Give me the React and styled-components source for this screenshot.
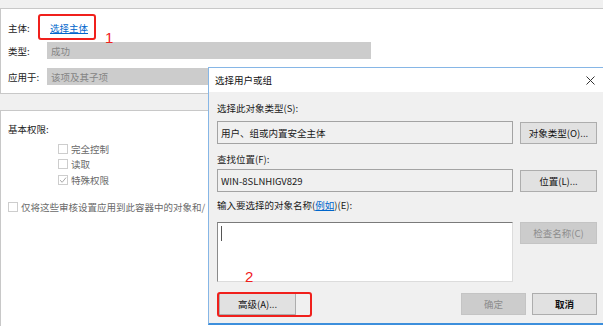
import styled, { createGlobalStyle } from "styled-components";

const GlobalStyle = createGlobalStyle`
  html, body {
    margin: 0;
    padding: 0;
  }
  body {
    background: #f0f0f0;
    font-family: "Noto Sans CJK SC", "Noto Sans", sans-serif;
    font-size: 9.5px;
    color: #1a1a1a;
  }
`;

export default function App() {
  return (
    <Screen>
      <GlobalStyle />
      <TopPanel>
        <FieldRow>
          <FieldLabel>主体:</FieldLabel>
          <LinkText $pad>选择主体</LinkText>
        </FieldRow>
        <FieldRow $gap={6}>
          <FieldLabel>类型:</FieldLabel>
          <Combo>成功</Combo>
        </FieldRow>
        <FieldRow $gap={9}>
          <FieldLabel>应用于:</FieldLabel>
          <Combo>该项及其子项</Combo>
        </FieldRow>
      </TopPanel>

      <BottomPanel>
        <SectionTitle>基本权限:</SectionTitle>
        <CheckList>
          <CheckItem>
            <Box />
            <CheckText>完全控制</CheckText>
          </CheckItem>
          <CheckItem>
            <Box />
            <CheckText>读取</CheckText>
          </CheckItem>
          <CheckItem>
            <Box>
              <svg width="8" height="8" viewBox="0 0 8 8">
                <path d="M1 4.2 L3.2 6.3 L7 1.6" fill="none" stroke="#a8a8a8" strokeWidth="1" />
              </svg>
            </Box>
            <CheckText>特殊权限</CheckText>
          </CheckItem>
        </CheckList>
        <ApplyRow>
          <Box />
          <CheckText>仅将这些审核设置应用到此容器中的对象和/</CheckText>
        </ApplyRow>
      </BottomPanel>

      <Dialog>
        <TitleBar>
          <span>选择用户或组</span>
          <CloseIcon width="9" height="9" viewBox="0 0 9 9">
            <path d="M0.5 0.5 L8.5 8.5 M8.5 0.5 L0.5 8.5" stroke="#333" strokeWidth="1" />
          </CloseIcon>
        </TitleBar>
        <DialogBody>
          <DlgLabel $gap={10}>选择此对象类型(S):</DlgLabel>
          <DlgRow $gap={7}>
            <ReadBox>用户、组或内置安全主体</ReadBox>
            <Button>对象类型(O)...</Button>
          </DlgRow>
          <DlgLabel $gap={9}>查找位置(F):</DlgLabel>
          <DlgRow $gap={4}>
            <ReadBox>WIN-8SLNHIGV829</ReadBox>
            <Button>位置(L)...</Button>
          </DlgRow>
          <DlgLabel $gap={7}>
            <span>输入要选择的对象名称(</span>
            <LinkText>例如</LinkText>
            <span>)(E):</span>
          </DlgLabel>
          <DlgRow $gap={11} $top>
            <NameArea>
              <Caret />
            </NameArea>
            <Button $disabled>检查名称(C)</Button>
          </DlgRow>
          <FooterRow>
            <Button>高级(A)...</Button>
            <Spacer />
            <Button $disabled $w={65}>确定</Button>
            <Button $w={65} $strong>取消</Button>
          </FooterRow>
        </DialogBody>
      </Dialog>

      <Mark style={{ left: 38, top: 14, width: 58, height: 26 }} />
      <MarkNumber style={{ left: 105, top: 30 }}>1</MarkNumber>
      <Mark style={{ left: 217, top: 292, width: 95, height: 25 }} />
      <MarkNumber style={{ left: 245, top: 269 }}>2</MarkNumber>
    </Screen>
  );
}

const Screen = styled.div`
  position: relative;
  width: 603px;
  height: 326px;
  overflow: hidden;
  background: #f0f0f0;
  padding-top: 8px;
  box-sizing: border-box;
  display: flex;
  flex-direction: column;
`;

const TopPanel = styled.section`
  background: #fff;
  border: 1px solid #c8c8c8;
  border-right: none;
  height: 86px;
  box-sizing: border-box;
  padding: 10px 0 0 7px;
  display: flex;
  flex-direction: column;
`;

const FieldRow = styled.div`
  display: flex;
  align-items: center;
  height: 17px;
  margin-top: ${(p) => p.$gap || 0}px;
`;

const FieldLabel = styled.span`
  width: 39px;
  flex: none;
  color: #222;
`;

const LinkText = styled.span`
  color: #0066cc;
  text-decoration: underline;
  padding-left: ${(p) => (p.$pad ? 3 : 0)}px;
`;

const Combo = styled.div`
  width: 320px;
  height: 17px;
  background: #cccccc;
  color: #858585;
  padding-left: 4px;
  display: flex;
  align-items: center;
`;

const BottomPanel = styled.section`
  flex: 1;
  margin-top: 16px;
  background: #fff;
  border: 1px solid #c8c8c8;
  border-right: none;
  border-bottom: none;
  padding: 12px 0 0 7px;
  display: flex;
  flex-direction: column;
`;

const SectionTitle = styled.div`
  height: 12px;
  line-height: 12px;
  color: #222;
`;

const CheckList = styled.div`
  display: flex;
  flex-direction: column;
  margin: 6px 0 0 50px;
`;

const CheckItem = styled.div`
  display: flex;
  align-items: center;
  height: 15.5px;
`;

const Box = styled.span`
  width: 10px;
  height: 10px;
  box-sizing: border-box;
  border: 1px solid #cdcdcd;
  background: #fff;
  flex: none;
  display: flex;
  align-items: center;
  justify-content: center;
`;

const CheckText = styled.span`
  margin-left: 3px;
  color: #6a6a6a;
  white-space: nowrap;
`;

const ApplyRow = styled.div`
  display: flex;
  align-items: center;
  width: 200px;
  overflow: hidden;
  height: 14px;
  margin-top: 12px;
`;

const Dialog = styled.div`
  position: absolute;
  left: 208px;
  top: 67px;
  width: 396px;
  height: 258px;
  box-sizing: border-box;
  border: 1px solid #86b6e6;
  border-bottom: 2px solid #3d8fdc;
  display: flex;
  flex-direction: column;
  background: #f0f0f0;
`;

const TitleBar = styled.div`
  height: 24px;
  flex: none;
  background: #fff;
  display: flex;
  align-items: center;
  justify-content: space-between;
  padding: 0 8px 0 6px;
  color: #111;
`;

const CloseIcon = styled.svg`
  display: block;
`;

const DialogBody = styled.div`
  flex: 1;
  padding: 0 6px 0 8px;
  display: flex;
  flex-direction: column;
`;

const DlgLabel = styled.div`
  display: flex;
  height: 12px;
  line-height: 12px;
  margin-top: ${(p) => p.$gap}px;
  white-space: nowrap;
`;

const DlgRow = styled.div`
  display: flex;
  gap: 7px;
  align-items: ${(p) => (p.$top ? "flex-start" : "center")};
  margin-top: ${(p) => p.$gap}px;
`;

const ReadBox = styled.div`
  width: 296px;
  height: 23px;
  box-sizing: border-box;
  border: 1px solid #a3a3a3;
  padding-left: 3px;
  display: flex;
  align-items: center;
  color: #1a1a1a;
`;

const NameArea = styled.div`
  position: relative;
  width: 296px;
  height: 60px;
  box-sizing: border-box;
  background: #fff;
  border-top: 1px solid #7a7a7a;
  border-left: 1px solid #8a8a8a;
  border-right: 1px solid #dcdcdc;
  border-bottom: 1px solid #dcdcdc;
`;

const Caret = styled.span`
  position: absolute;
  left: 3px;
  top: 3px;
  width: 1px;
  height: 15px;
  background: #555;
`;

const Button = styled.div`
  width: ${(p) => p.$w || 77}px;
  height: 22px;
  box-sizing: border-box;
  flex: none;
  display: flex;
  align-items: center;
  justify-content: center;
  background: ${(p) => (p.$disabled ? "#cccccc" : "#e1e1e1")};
  border: 1px solid ${(p) => (p.$disabled ? "#c4c4c4" : "#adadad")};
  color: ${(p) => (p.$disabled ? "#8d8d8d" : "#111")};
  font-weight: ${(p) => (p.$strong ? 600 : 400)};
  white-space: nowrap;
`;

const FooterRow = styled.div`
  display: flex;
  gap: 6px;
  margin-top: 11px;
  padding-left: 2px;
`;

const Spacer = styled.div`
  flex: 1;
`;

const Mark = styled.div`
  position: absolute;
  box-sizing: border-box;
  border: 2px solid #f0201c;
  border-radius: 3px;
`;

const MarkNumber = styled.span`
  position: absolute;
  font-family: "Liberation Sans", sans-serif;
  font-size: 15px;
  line-height: 15px;
  color: #f0201c;
`;
